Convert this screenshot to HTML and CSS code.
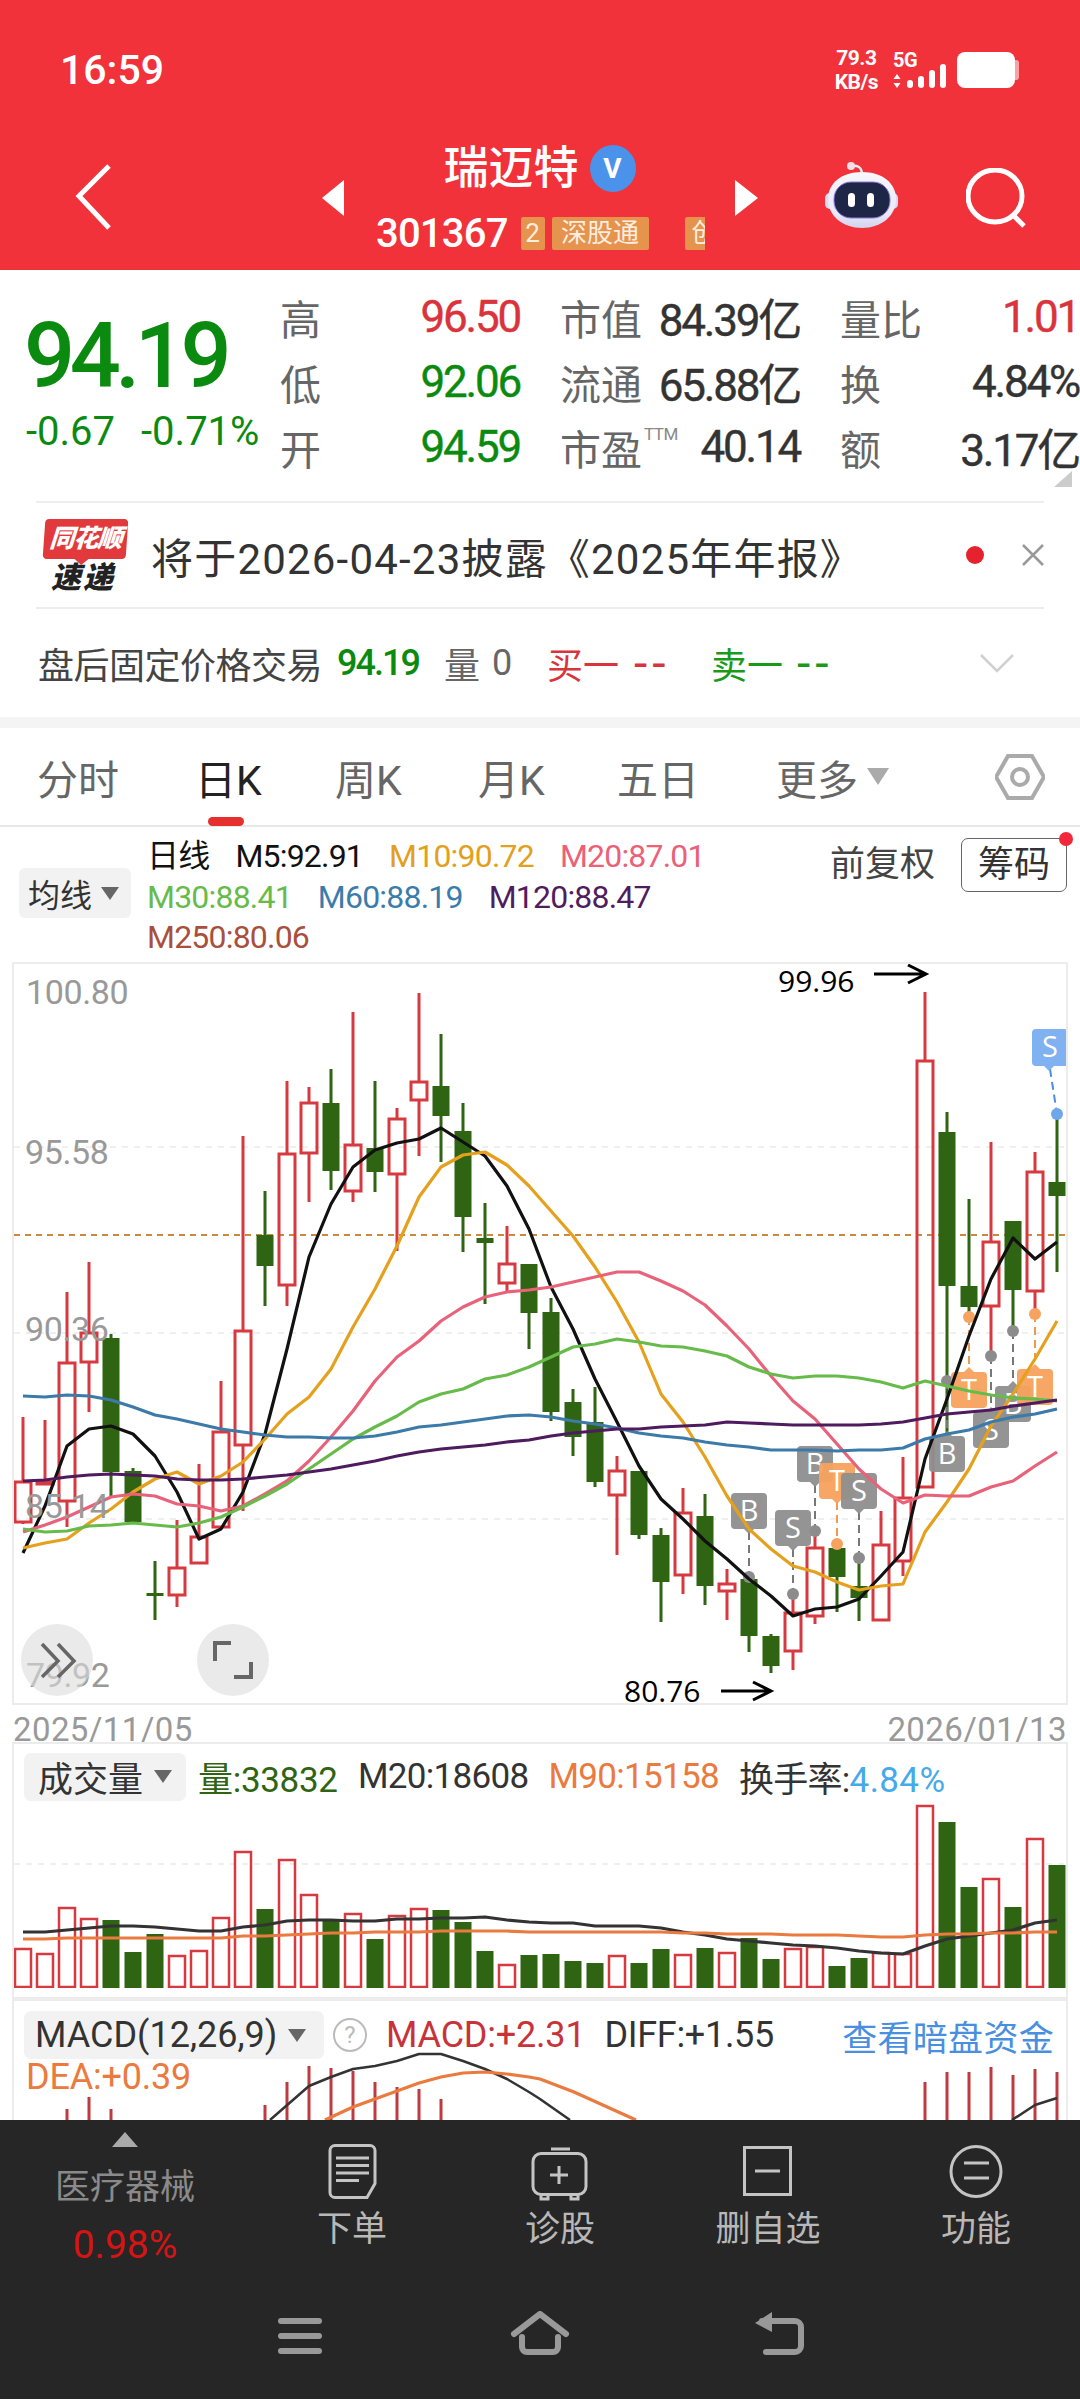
FILE: index.html
```html
<!DOCTYPE html>
<html lang="zh">
<head>
<meta charset="utf-8">
<title>瑞迈特 301367</title>
<link rel="stylesheet" href="styles.css">
</head>
<body>
<div class="page">
  <header class="head">
    <div class="status">
      <span class="time">16:59</span>
      <div class="st-right">
        <div class="net"><span>79.3</span><span>KB/s</span></div>
        <svg class="sig" width="54" height="36" viewBox="893 53 54 36">
          <text x="893" y="68" class="sig-t">5G</text>
          <path class="wf" d="M897 75l3.500 5h-7zM897 89l3.500-5h-7z"/>
          <rect class="wf" x="907" y="81" width="6" height="8" rx="3"/>
          <rect class="wf" x="918" y="77" width="6" height="12" rx="3"/>
          <rect class="wf" x="929" y="71" width="6" height="18" rx="3"/>
          <rect class="wf" x="940" y="65" width="6" height="24" rx="3"/>
        </svg>
        <svg class="bat" width="62" height="36" viewBox="0 0 62 36">
          <rect class="wf" width="58" height="36" rx="8"/>
          <path class="bat-tip" d="M58 8h1a3 3 0 0 1 3 3v14a3 3 0 0 1-3 3h-1z"/>
        </svg>
      </div>
    </div>
    <nav class="nav">
      <div class="nav-left">
        <svg class="back" width="38" height="68" viewBox="0 0 38 68"><path d="M34 3L4 33l30 32" class="ws"/></svg>
      </div>
      <span class="tri-l"></span>
      <div class="nav-mid">
        <div class="title"><span>瑞迈特</span><span class="vbadge">V</span></div>
        <div class="code">
          <span class="code-n">301367</span>
          <span class="tag tag-2">2</span>
          <span class="tag tag-s">深股通</span>
          <span class="tag tag-c">创</span>
        </div>
      </div>
      <span class="tri-r"></span>
      <svg class="robot" width="74" height="68" viewBox="825 162 74 68">
        <defs>
          <linearGradient id="rbg" x1="0" y1="0" x2="0" y2="1"><stop offset="0" stop-color="#f7f7fd"/><stop offset=".75" stop-color="#e8e8f8"/><stop offset="1" stop-color="#d2d3ee"/></linearGradient>
        </defs>
        <path class="rb-ant" d="M851 166c5-1 10 0 11 7"/>
        <circle class="rb-ball" cx="851" cy="166" r="4"/>
        <rect class="rb-ear" x="825" y="193" width="73" height="16" rx="5"/>
        <path class="rb-head" d="M862 172c20 0 34 11 34 27 0 17-15 29-34 29s-34-12-34-29c0-16 14-27 34-27z"/>
        <rect class="rb-face" x="834" y="182" width="56" height="36" rx="17"/>
        <rect class="rb-eye" x="848" y="193" width="7" height="14" rx="3.500"/>
        <rect class="rb-eye" x="867" y="193" width="7" height="14" rx="3.500"/>
      </svg>
      <svg class="search" width="60" height="60" viewBox="0 0 60 60"><ellipse cx="29" cy="28" rx="27" ry="26" class="ws"/><path d="M48 48l10 10" class="ws"/></svg>
    </nav>
  </header>

  <section class="quote">
    <div class="q-left">
      <div class="q-price">94.19</div>
      <div class="q-chg"><span>-0.67</span><span>-0.71%</span></div>
    </div>
    <div class="q-grid">
      <div class="cell"><span class="lb">高</span><span class="val red">96.50</span></div>
      <div class="cell"><span class="lb">市值</span><span class="val dark">84.39亿</span></div>
      <div class="cell"><span class="lb">量比</span><span class="val red">1.01</span></div>
      <div class="cell"><span class="lb">低</span><span class="val green">92.06</span></div>
      <div class="cell"><span class="lb">流通</span><span class="val dark">65.88亿</span></div>
      <div class="cell"><span class="lb">换</span><span class="val dark">4.84%</span></div>
      <div class="cell"><span class="lb">开</span><span class="val green">94.59</span></div>
      <div class="cell"><span class="lb">市盈<sup class="ttm">TTM</sup></span><span class="val dark">40.14</span></div>
      <div class="cell"><span class="lb">额</span><span class="val dark">3.17亿</span></div>
    </div>
    <span class="corner"></span>
  </section>

  <section class="notice">
    <div class="logo">
      <span class="logo-top">同花顺</span>
      <span class="logo-bot">速递</span>
    </div>
    <span class="notice-t">将于2026-04-23披露《2025年年报》</span>
    <span class="dot"></span>
    <svg class="close" width="24" height="24" viewBox="0 0 24 24"><path d="M2 2l20 20M22 2L2 22"/></svg>
  </section>

  <section class="after">
    <span class="af-t">盘后固定价格交易</span>
    <span class="af-p">94.19</span>
    <span class="af-q">量</span><span class="af-z">0</span>
    <span class="af-b">买一</span><span class="af-b af-d">--</span>
    <span class="af-s">卖一</span><span class="af-s af-d">--</span>
    <svg class="af-c" width="36" height="20" viewBox="0 0 36 20"><path d="M2 2l16 16L34 2"/></svg>
  </section>
  <div class="sep"></div>

  <div class="tabs">
    <span class="tab">分时</span>
    <span class="tab on">日K</span>
    <span class="tab">周K</span>
    <span class="tab">月K</span>
    <span class="tab">五日</span>
    <span class="tab">更多<i class="tab-tri"></i></span>
    <svg class="hex" width="50" height="46" viewBox="994 755 50 46"><path d="M1007 757h24l12 21-12 21h-24l-12-21z"/><circle cx="1019" cy="778" r="8"/></svg>
  </div>

  <div class="legend">
    <div class="lg-btn"><span>均线</span><i class="dn"></i></div>
    <div class="lg-lines">
      <div class="lg-row"><span class="c-k">日线</span><span class="c-k">M5:92.91</span><span class="c-10">M10:90.72</span><span class="c-20">M20:87.01</span></div>
      <div class="lg-row"><span class="c-30">M30:88.41</span><span class="c-60">M60:88.19</span><span class="c-120">M120:88.47</span></div>
      <div class="lg-row"><span class="c-250">M250:80.06</span></div>
    </div>
    <div class="lg-right">
      <span class="fq">前复权</span>
      <span class="chip">筹码<i class="chip-dot"></i></span>
    </div>
  </div>

  <div class="panel main">
    <svg class="chart" width="1052" height="739" viewBox="14 965 1052 739">
      <path class="grid" d="M14 1148H1066M14 1334H1066M14 1520H1066"/>
      <path class="ref" d="M14 1236H1066"/>
      <path class="r-w" d="M23 1418V1483M23 1523V1525M45 1421V1483M67 1293V1364M67 1502V1528M89 1263V1334M89 1363V1413M177 1521V1569M177 1596V1608M199 1465V1538M221 1382V1433M243 1137V1332M243 1446V1512M287 1082V1155M287 1286V1307M309 1088V1104M309 1154V1203M353 1013V1146M353 1192V1203M397 1109V1120M397 1175V1252M419 994V1083M419 1101V1157M507 1227V1265M507 1284V1293M617 1457V1472M617 1496V1556M683 1489V1514M683 1576V1595M727 1570V1585M727 1592V1621M793 1595V1614M793 1652V1671M815 1533V1549M815 1617V1625M881 1512V1546M903 1458V1499M903 1562V1577M925 993V1062M991 1143V1243M991 1307V1357M1035 1153V1173M1035 1292V1313"/>
      <path class="r-b" d="M15 1483h16v40h-16zM37 1483h16v2h-16zM59 1364h16v138h-16zM81 1334h16v29h-16zM169 1569h16v27h-16zM191 1538h16v26h-16zM213 1433h16v95h-16zM235 1332h16v114h-16zM279 1155h16v131h-16zM301 1104h16v50h-16zM345 1146h16v46h-16zM389 1120h16v55h-16zM411 1083h16v18h-16zM499 1265h16v19h-16zM609 1472h16v24h-16zM675 1514h16v62h-16zM719 1585h16v7h-16zM785 1614h16v38h-16zM807 1549h16v68h-16zM873 1546h16v75h-16zM895 1499h16v63h-16zM917 1062h16v426h-16zM983 1243h16v64h-16zM1027 1173h16v119h-16z"/>
      <path class="g-w" d="M111 1335V1497M133 1469V1523M155 1562V1621M265 1192V1307M331 1070V1191M375 1082V1193M441 1035V1163M463 1104V1253M485 1204V1305M529 1265V1350M551 1299V1422M573 1390V1457M595 1388V1488M639 1472V1540M661 1529V1623M705 1495V1606M749 1577V1653M771 1635V1674M837 1549V1613M859 1560V1622M947 1113V1437M969 1200V1318M1013 1222V1332M1057 1115V1273"/>
      <path class="g-b" d="M102.500 1339h17v134h-17zM124.500 1472h17v51h-17zM146.500 1594h17v3h-17zM256.500 1236h17v31h-17zM322.500 1104h17v68h-17zM366.500 1149h17v24h-17zM432.500 1087h17v30h-17zM454.500 1132h17v86h-17zM476.500 1239h17v5h-17zM520.500 1265h17v49h-17zM542.500 1313h17v100h-17zM564.500 1403h17v35h-17zM586.500 1423h17v60h-17zM630.500 1472h17v64h-17zM652.500 1536h17v47h-17zM696.500 1517h17v70h-17zM740.500 1580h17v57h-17zM762.500 1637h17v30h-17zM828.500 1549h17v29h-17zM850.500 1587h17v12h-17zM938.500 1133h17v154h-17zM960.500 1287h17v21h-17zM1004.500 1222h17v69h-17zM1048.500 1183h17v14h-17z"/>

      <path class="d-g" d="M749 1533V1578M793 1550V1595M815 1486V1532M859 1513V1559M947 1382V1434M991 1357V1410M1013 1332V1384"/>
      <path class="d-o" d="M837 1503V1545M969 1318V1370M1035 1315V1367"/>
      <path class="d-b" d="M1050 1070L1057 1115"/>
      <g class="dots-g"><circle cx="749" cy="1578" r="6"/><circle cx="793" cy="1595" r="6"/><circle cx="815" cy="1532" r="6"/><circle cx="859" cy="1559" r="6"/><circle cx="947" cy="1382" r="6"/><circle cx="991" cy="1357" r="6"/><circle cx="1013" cy="1332" r="6"/></g>
      <g class="dots-o"><circle cx="837" cy="1545" r="6"/><circle cx="969" cy="1318" r="6"/><circle cx="1035" cy="1315" r="6"/></g>
      <circle class="dots-b" cx="1057" cy="1115" r="6"/>

      <g class="mk mk-g"><rect x="731" y="1494" width="36" height="36" rx="4"/><path d="M744 1530h10l-5 5z"/><text x="749" y="1522">B</text></g>
      <g class="mk mk-g"><rect x="775" y="1511" width="36" height="36" rx="4"/><path d="M788 1547h10l-5 5z"/><text x="793" y="1539">S</text></g>
      <g class="mk mk-g"><rect x="797" y="1447" width="36" height="36" rx="4"/><path d="M810 1483h10l-5 5z"/><text x="815" y="1475">B</text></g>
      <g class="mk mk-o"><rect x="819" y="1464" width="36" height="36" rx="4"/><path d="M832 1500h10l-5 5z"/><text x="837" y="1492">T</text></g>
      <g class="mk mk-g"><rect x="841" y="1474" width="36" height="36" rx="4"/><path d="M854 1510h10l-5 5z"/><text x="859" y="1502">S</text></g>
      <g class="mk mk-g"><rect x="929" y="1437" width="36" height="36" rx="4"/><path d="M942 1437h10l-5-5z"/><text x="947" y="1465">B</text></g>
      <g class="mk mk-o"><rect x="951" y="1373" width="36" height="36" rx="4"/><path d="M964 1373h10l-5-5z"/><text x="969" y="1401">T</text></g>
      <g class="mk mk-g"><rect x="973" y="1413" width="36" height="36" rx="4"/><path d="M986 1413h10l-5-5z"/><text x="991" y="1441">S</text></g>
      <g class="mk mk-g"><rect x="995" y="1387" width="36" height="36" rx="4"/><path d="M1008 1387h10l-5-5z"/><text x="1013" y="1415">B</text></g>
      <g class="mk mk-o"><rect x="1017" y="1370" width="36" height="36" rx="4"/><path d="M1030 1370h10l-5-5z"/><text x="1035" y="1398">T</text></g>
      <g class="mk mk-b"><rect x="1032" y="1030" width="36" height="37" rx="4"/><path d="M1044 1067h10l-5 5z"/><text x="1050" y="1058">S</text></g>

      <polyline class="l-k" points="23,1554 45,1507 67,1447 89,1430 111,1427 133,1435 155,1457 177,1493 199,1540 221,1530 243,1493 265,1435 287,1350 309,1258 331,1205 353,1168 375,1151 397,1144 419,1140 441,1129 463,1143 485,1157 507,1187 529,1230 551,1288 573,1330 595,1380 617,1423 639,1467 661,1500 683,1520 705,1542 727,1560 749,1580 771,1597 793,1617 815,1610 837,1608 859,1600 881,1577 903,1553 925,1460 947,1400 969,1337 991,1280 1013,1239 1035,1260 1057,1243"/>
      <polyline class="l-10" points="23,1549 45,1544 67,1540 89,1524 111,1510 133,1493 155,1480 177,1473 199,1485 221,1477 243,1463 265,1440 287,1415 309,1398 331,1370 353,1328 375,1290 397,1247 419,1198 441,1168 463,1156 485,1153 507,1166 529,1187 551,1212 573,1237 595,1268 617,1303 639,1343 661,1395 683,1423 705,1458 727,1497 749,1530 771,1550 793,1567 815,1573 837,1583 859,1591 881,1587 903,1585 925,1533 947,1503 969,1470 991,1427 1013,1395 1035,1360 1057,1322"/>
      <polyline class="l-20" points="23,1533 45,1526 67,1518 89,1508 111,1498 133,1495 155,1497 177,1505 199,1507 221,1512 243,1507 265,1495 287,1482 309,1462 331,1438 353,1412 375,1382 397,1358 419,1342 441,1322 463,1308 485,1298 507,1293 529,1291 551,1288 573,1283 595,1278 617,1273 639,1273 661,1282 683,1292 705,1306 727,1327 749,1350 771,1377 793,1402 815,1420 837,1445 859,1470 881,1490 903,1504 925,1496 947,1497 969,1497 991,1488 1013,1482 1035,1467 1057,1453"/>
      <polyline class="l-30" points="23,1530 45,1533 67,1532 89,1527 111,1526 133,1524 155,1526 177,1528 199,1524 221,1518 243,1508 265,1497 287,1485 309,1470 331,1455 353,1440 375,1428 397,1417 419,1403 441,1395 463,1390 485,1380 507,1376 529,1368 551,1358 573,1348 595,1345 617,1340 639,1343 661,1347 683,1348 705,1352 727,1357 749,1368 771,1375 793,1379 815,1377 837,1377 859,1379 881,1383 903,1389 925,1382 947,1387 969,1392 991,1396 1013,1399 1035,1400 1057,1402"/>
      <polyline class="l-60" points="23,1397 45,1398 67,1396 89,1397 111,1401 133,1408 155,1416 177,1420 199,1425 221,1430 243,1433 265,1436 287,1438 309,1438 331,1439 353,1439 375,1437 397,1433 419,1428 441,1426 463,1423 485,1420 507,1417 529,1416 551,1418 573,1422 595,1425 617,1429 639,1434 661,1437 683,1439 705,1443 727,1446 749,1448 771,1451 793,1451 815,1451 837,1452 859,1451 881,1451 903,1449 925,1440 947,1435 969,1431 991,1423 1013,1418 1035,1415 1057,1410"/>
      <polyline class="l-120" points="23,1482 45,1481 67,1478 89,1476 111,1475 133,1476 155,1477 177,1480 199,1481 221,1481 243,1480 265,1478 287,1476 309,1473 331,1470 353,1466 375,1462 397,1457 419,1453 441,1450 463,1448 485,1446 507,1443 529,1441 551,1437 573,1434 595,1432 617,1430 639,1430 661,1428 683,1427 705,1426 727,1423 749,1424 771,1425 793,1426 815,1426 837,1426 859,1426 881,1425 903,1423 925,1419 947,1415 969,1413 991,1411 1013,1407 1035,1404 1057,1401"/>

      <text class="ax" x="26" y="1005">100.80</text>
      <text class="ax" x="25" y="1165">95.58</text>
      <text class="ax" x="25" y="1342">90.36</text>
      <text class="ax" x="25" y="1519">85.14</text>
      <text class="ax" x="26" y="1688">79.92</text>

      <text class="note" x="778" y="993">99.96</text>
      <path class="arr" d="M874 975H925M908 966L926 975L908 984"/>
      <text class="note" x="624" y="1703">80.76</text>
      <path class="arr" d="M721 1692H770M753 1683L771 1692L753 1701"/>

      <circle class="round" cx="57" cy="1661" r="36"/>
      <path class="ico" d="M42 1645l16 17-16 16M58 1645l16 17-16 16"/>
      <circle class="round" cx="233" cy="1661" r="36"/>
      <path class="ico2" d="M215 1662v-18h16M234 1678h17v-15"/>
    </svg>
  </div>

  <div class="dates"><span>2025/11/05</span><span>2026/01/13</span></div>

  <div class="panel vol">
    <div class="sub-head">
      <div class="sub-btn sub-btn-v"><span>成交量</span><i class="dn"></i></div>
      <span class="t-g">量:33832</span>
      <span class="t-d">M20:18608</span>
      <span class="t-o">M90:15158</span>
      <span class="t-d">换手率:<b class="t-b">4.84%</b></span>
    </div>
    <svg class="chart" width="1052" height="186" viewBox="14 1803 1052 186">
      <path class="grid" d="M14 1865H1066"/>
      <path class="v-r" d="M15 1950h16v38h-16zM37 1955h16v33h-16zM59 1909h16v79h-16zM81 1920h16v68h-16zM169 1957h16v31h-16zM191 1952h16v36h-16zM213 1919h16v69h-16zM235 1853h16v135h-16zM279 1861h16v127h-16zM301 1896h16v92h-16zM345 1915h16v73h-16zM389 1917h16v71h-16zM411 1910h16v78h-16zM499 1966h16v22h-16zM609 1957h16v31h-16zM675 1956h16v32h-16zM719 1954h16v34h-16zM785 1950h16v38h-16zM807 1948h16v40h-16zM873 1954h16v34h-16zM895 1955h16v33h-16zM917 1807h16v181h-16zM983 1880h16v108h-16zM1027 1840h16v148h-16z"/>
      <path class="g-b" d="M102.500 1921h17v68h-17zM124.500 1953h17v36h-17zM146.500 1935h17v54h-17zM256.500 1910h17v79h-17zM322.500 1920h17v69h-17zM366.500 1940h17v49h-17zM432.500 1911h17v78h-17zM454.500 1923h17v66h-17zM476.500 1952h17v37h-17zM520.500 1956h17v33h-17zM542.500 1955h17v34h-17zM564.500 1962h17v27h-17zM586.500 1964h17v25h-17zM630.500 1964h17v25h-17zM652.500 1950h17v39h-17zM696.500 1949h17v40h-17zM740.500 1939h17v50h-17zM762.500 1960h17v29h-17zM828.500 1967h17v22h-17zM850.500 1959h17v30h-17zM938.500 1823h17v166h-17zM960.500 1888h17v101h-17zM1004.500 1908h17v81h-17zM1048.500 1866h17v123h-17z"/>
      <polyline class="l-v" points="23,1933 45,1933 67,1931 89,1929 111,1927 133,1927 155,1928 177,1930 199,1932 221,1932 243,1928 265,1926 287,1922 309,1921 331,1921 353,1922 375,1922 397,1920 419,1920 441,1919 463,1919 485,1918 507,1921 529,1923 551,1924 573,1924 595,1927 617,1927 639,1927 661,1929 683,1933 705,1936 727,1940 749,1942 771,1944 793,1946 815,1947 837,1949 859,1952 881,1954 903,1955 925,1947 947,1940 969,1937 991,1934 1013,1931 1035,1924 1057,1921"/>
      <polyline class="l-o" points="23,1940 45,1940 67,1939 89,1939 111,1939 133,1939 155,1939 177,1939 199,1939 221,1939 243,1937 265,1937 287,1936 309,1935 331,1934 353,1934 375,1933 397,1933 419,1933 441,1932 463,1932 485,1932 507,1932 529,1933 551,1933 573,1933 595,1933 617,1933 639,1933 661,1933 683,1934 705,1934 727,1935 749,1935 771,1935 793,1936 815,1936 837,1936 859,1937 881,1938 903,1938 925,1936 947,1935 969,1935 991,1934 1013,1934 1035,1933 1057,1933"/>
    </svg>
  </div>

  <div class="panel macd">
    <svg class="chart macd-svg" width="1052" height="119" viewBox="14 2002 1052 119">
      <path class="m-r" d="M67 2110V2121M89 2098V2121M111 2110V2121M265 2106V2121M287 2083V2121M309 2067V2121M331 2069V2121M353 2072V2121M375 2083V2121M397 2088V2121M419 2090V2121M441 2100V2121M925 2083V2121M947 2073V2121M969 2073V2121M991 2068V2121M1013 2076V2121M1035 2070V2121M1057 2073V2121"/>
      <polyline class="l-m" points="270,2121 309,2087 331,2078 353,2070 375,2067 397,2062 419,2055 441,2055 463,2062 485,2070 507,2080 529,2093 540,2100 570,2121"/>
      <polyline class="l-m" points="1012,2121 1035,2106 1057,2099"/>
      <polyline class="l-mo" points="325,2121 353,2108 375,2100 397,2092 419,2084 441,2078 463,2074 485,2073 507,2075 529,2078 540,2080 574,2093 636,2121"/>
    </svg>
    <div class="sub-head macd-head">
      <div class="sub-btn sub-btn-m"><span>MACD(12,26,9)</span><i class="dn"></i></div>
      <span class="q-mark">?</span>
      <span class="t-r">MACD:+2.31</span>
      <span class="t-d t-diff">DIFF:+1.55</span>
      <span class="t-l">查看暗盘资金</span>
    </div>
    <div class="dea">DEA:+0.39</div>
  </div>

  <footer class="foot">
    <div class="foot-row">
      <div class="f-sec">
        <i class="f-up"></i>
        <span class="f-name">医疗器械</span>
        <span class="f-pct">0.98%</span>
      </div>
      <div class="f-tab">
        <svg class="f-ic" width="60" height="58" viewBox="322 2143 60 58"><path d="M335 2145.500h35a5 5 0 0 1 5 5v33l-8 14h-32a5 5 0 0 1-5-5v-42a5 5 0 0 1 5-5zM336 2158h33M336 2165.500h33M336 2173h33M336 2180.500h23"/></svg>
        <span>下单</span>
      </div>
      <div class="f-tab">
        <svg class="f-ic" width="60" height="58" viewBox="530 2143 60 58"><path d="M551 2149h19M541 2153.500h37a8 8 0 0 1 8 8v25a8 8 0 0 1-8 8h-37a8 8 0 0 1-8-8v-25a8 8 0 0 1 8-8zM559 2166v18M550 2175h18M541 2195v4h7v-4M571 2195v4h7v-4"/></svg>
        <span>诊股</span>
      </div>
      <div class="f-tab">
        <svg class="f-ic" width="60" height="58" viewBox="738 2143 60 58"><path d="M744.500 2147.500h46v47h-46zM755 2171h25"/></svg>
        <span>删自选</span>
      </div>
      <div class="f-tab">
        <svg class="f-ic" width="60" height="58" viewBox="945 2143 60 58"><circle cx="975" cy="2171.500" r="25"/><path d="M963 2163h25M963 2178h25"/></svg>
        <span>功能</span>
      </div>
    </div>
    <div class="sys">
      <svg width="60" height="44" viewBox="270 2312 60 44"><path class="sys-f" d="M281 2319h38a3 3 0 0 1 0 6h-38a3 3 0 0 1 0-6zM281 2334h38a3 3 0 0 1 0 6h-38a3 3 0 0 1 0-6zM281 2349h38a3 3 0 0 1 0 6h-38a3 3 0 0 1 0-6z"/></svg>
      <svg width="60" height="44" viewBox="510 2312 60 44"><path class="sys-s" d="M514 2335l26-20 26 20"/><path class="sys-s" d="M522 2338v10a5 5 0 0 0 5 5h26a5 5 0 0 0 5-5v-10"/></svg>
      <svg width="60" height="44" viewBox="750 2312 60 44"><path class="sys-s" d="M762 2322h33a6 6 0 0 1 6 6v19a6 6 0 0 1-6 6h-29"/><path class="sys-f" d="M772 2313v20l-17-9z"/></svg>
    </div>
  </footer>
</div>
</body>
</html>
```

FILE: styles.css
```css
* { box-sizing: border-box; }
html, body { margin: 0; padding: 0; }
body { width: 1080px; height: 2400px; overflow: hidden; background: #fff; font-family: Roboto, "Noto Sans CJK SC", sans-serif; color: #333; }
i { font-style: normal; }
.page { width: 1080px; height: 2400px; display: flex; flex-direction: column; overflow: hidden; }

/* header */
.head { height: 270px; background: #f1323a; color: #fff; flex: none; }
.status { height: 140px; padding: 0 61px 0 60px; display: flex; align-items: center; justify-content: space-between; }
.time { font-size: 41px; font-weight: 500; }
.st-right { display: flex; align-items: center; }
.net { display: flex; flex-direction: column; align-items: center; font-size: 21px; font-weight: 700; line-height: 24px; letter-spacing: -.5px; margin-right: 15px; }
.sig { margin-right: 10px; overflow: visible; }
.sig-t { font-size: 20px; font-weight: 700; fill: #fff; letter-spacing: -.5px; }
.wf { fill: #fff; }
.bat-tip { fill: #fff; opacity: .55; }
.ws { fill: none; stroke: #fff; stroke-width: 5; }
.nav { height: 130px; display: flex; align-items: flex-start; }
.nav-left { width: 322px; padding: 23px 0 0 75px; }
.back { display: block; }
.tri-l, .tri-r { width: 0; height: 0; margin-top: 40px; border-top: 18px solid transparent; border-bottom: 18px solid transparent; }
.tri-l { border-right: 22px solid #fff; }
.tri-r { border-left: 23px solid #fff; }
.nav-mid { width: 391px; display: flex; flex-direction: column; }
.title { margin-top: 5px; height: 47px; display: flex; justify-content: center; align-items: center; gap: 11px; font-size: 45px; font-weight: 500; line-height: 47px; }
.vbadge { width: 46px; height: 47px; border-radius: 50%; background: #4b93ea; font-size: 28px; font-weight: 700; font-family: Roboto, sans-serif; display: flex; align-items: center; justify-content: center; }
.code { margin-top: 18px; height: 47px; width: 361px; padding-left: 32px; display: flex; align-items: center; overflow: hidden; white-space: nowrap; }
.code-n { font-size: 40px; font-weight: 500; letter-spacing: -.8px; line-height: 47px; }
.tag { background: #e6934d; height: 33px; font-size: 26px; line-height: 33px; text-align: center; flex: none; border-radius: 2px; color: #fdeee0; }
.tag-2 { width: 24px; margin-left: 13px; }
.tag-s { width: 97px; margin-left: 7px; }
.tag-c { width: 36px; margin-left: 36px; text-align: left; padding-left: 7px; }
.robot { margin: 22px 0 0 67px; }
.rb-ant { fill: none; stroke: #eee; stroke-width: 2.500; }
.rb-ball { fill: #f4dfe4; }
.rb-ear { fill: #d9daf2; }
.rb-head { fill: url(#rbg); }
.rb-face { fill: #1d2647; stroke: #8f79d8; stroke-width: 1; }
.rb-eye { fill: #fff; }
.search { margin: 28px 0 0 67px; }

/* quote */
.quote { height: 231px; flex: none; display: flex; position: relative; }
.q-left { width: 280px; padding: 42px 0 0 26px; flex: none; }
.q-price { font-size: 90px; line-height: 90px; font-weight: 500; color: #0b8a10; letter-spacing: -5.500px; margin-left: -2px; }
.q-chg { margin-top: 9px; display: flex; gap: 26px; font-size: 40px; line-height: 42px; color: #0b8a10; white-space: nowrap; }
.q-grid { margin-top: 14px; display: grid; grid-template-columns: 240px 240px 239px; column-gap: 40px; grid-auto-rows: 65px; white-space: nowrap; }
.cell { display: flex; justify-content: space-between; align-items: center; }
.lb { font-size: 41px; color: #666; position: relative; }
.ttm { font-size: 17px; color: #888; position: absolute; left: 84px; top: 8px; line-height: 18px; letter-spacing: -.5px; }
.val { font-size: 44px; font-weight: 400; letter-spacing: -2.200px; -webkit-text-stroke: .4px currentColor; }
.red { color: #d9333c; }
.green { color: #0b8a10; }
.dark { color: #333; }
.corner { position: absolute; right: 8px; bottom: 14px; width: 0; height: 0; border-left: 18px solid transparent; border-bottom: 16px solid #ccc; }

/* notice */
.notice { height: 108px; flex: none; margin: 0 36px; border-top: 2px solid #eee; border-bottom: 2px solid #eee; display: flex; align-items: center; padding-left: 2px; }
.logo { width: 90px; display: flex; flex-direction: column; align-items: center; flex: none; }
.logo-top { width: 83px; height: 40px; background: #e23a3c; color: #fff; font-size: 25px; line-height: 40px; font-weight: 900; font-style: italic; text-align: center; border-radius: 4px; position: relative; letter-spacing: -1px; white-space: nowrap; transform: skewX(-4deg); margin-left: 4px; }
.logo-top::after { content: ""; position: absolute; left: 32px; top: 40px; border-left: 7px solid transparent; border-right: 7px solid transparent; border-top: 6px solid #e23a3c; }
.logo-bot { font-size: 30px; line-height: 28px; margin-top: 5px; font-weight: 900; font-style: italic; color: #222; letter-spacing: 2px; }
.notice-t { margin-left: 23px; font-size: 42px; color: #333; white-space: nowrap; letter-spacing: 1.200px; flex: none; width: 692px; }
.dot { width: 18px; height: 18px; border-radius: 50%; background: #e6222e; margin-left: 123px; flex: none; }
.close { margin-left: 37px; flex: none; }
.close path { stroke: #999; stroke-width: 2.500; fill: none; }

/* after hours */
.after { height: 108px; flex: none; display: flex; align-items: center; padding-left: 38px; white-space: nowrap; font-size: 36px; color: #444; }
.af-t { width: 299px; letter-spacing: -.5px; }
.af-p { color: #0b8a10; font-weight: 500; width: 107px; letter-spacing: -2px; }
.af-q { color: #666; width: 48px; }
.af-z { color: #666; width: 55px; }
.af-b { color: #d9333c; width: 87px; }
.af-s { color: #1a9a1a; width: 86px; }
.af-b.af-d { width: 77px; font-size: 48px; letter-spacing: 5px; }
.af-s.af-d { width: 182px; font-size: 48px; letter-spacing: 5px; }
.af-c path { fill: none; stroke: #d0d0d0; stroke-width: 2.500; }
.sep { height: 11px; background: #f4f4f4; flex: none; }

/* tabs */
.tabs { height: 99px; flex: none; display: grid; grid-template-columns: 158px 140px 143px 139px 159px 219px 50px; padding-left: 37px; align-items: stretch; border-bottom: 2px solid #e8e8e8; font-size: 41px; color: #666; position: relative; }
.tab { display: flex; align-items: center; position: relative; white-space: nowrap; }
.tab.on { color: #222; }
.tab.on::after { content: ""; position: absolute; left: 13px; bottom: -1px; width: 36px; height: 9px; border-radius: 5px; background: #e5302f; }
.tab-tri { width: 0; height: 0; margin-left: 9px; margin-top: 0; border-left: 11px solid transparent; border-right: 11px solid transparent; border-top: 17px solid #aaa; }
.hex { align-self: center; }
.hex path, .hex circle { fill: none; stroke: #aaa; stroke-width: 4; }

/* legend */
.legend { height: 135px; flex: none; display: flex; align-items: flex-start; padding-left: 19px; white-space: nowrap; }
.lg-btn { margin-top: 41px; width: 112px; height: 50px; background: #f2f2f2; border-radius: 6px; display: flex; align-items: center; padding-left: 9px; font-size: 32px; color: #333; flex: none; }
.dn { width: 0; height: 0; margin-left: 9px; border-left: 9px solid transparent; border-right: 9px solid transparent; border-top: 13px solid #666; flex: none; }
.lg-lines { margin: 9px 0 0 16px; font-size: 32px; line-height: 41px; letter-spacing: -.8px; flex: none; }
.lg-row { display: flex; gap: 26px; height: 40.500px; }
.c-k { color: #111; }
.c-10 { color: #e2a020; }
.c-20 { color: #ec6078; }
.c-30 { color: #67bb4a; }
.c-60 { color: #3a7cac; }
.c-120 { color: #4f1d5f; }
.c-250 { color: #a94f3c; }
.lg-right { margin-left: auto; display: flex; align-items: flex-start; padding: 11px 13px 0 0; }
.fq { font-size: 35px; color: #444; line-height: 54px; margin-right: 26px; }
.chip { width: 106px; height: 54px; border: 1px solid #666; border-radius: 7px; font-size: 36px; line-height: 52px; text-align: center; color: #333; position: relative; }
.chip-dot { position: absolute; right: -7px; top: -7px; width: 14px; height: 14px; border-radius: 50%; background: #f3283a; }

/* panels */
.panel { margin: 0 12px; border: 2px solid #ececec; flex: none; }
.main { height: 743px; }
.chart { display: block; }
.grid { fill: none; stroke: #eaeaea; stroke-width: 1.500; stroke-dasharray: 6 6; }
.ref { fill: none; stroke: #c98a3f; stroke-width: 2; stroke-dasharray: 6 5; }
.r-w { fill: none; stroke: #d63a40; stroke-width: 3; }
.r-b { fill: none; stroke: #d63a40; stroke-width: 3; }
.v-r { fill: none; stroke: #d63a40; stroke-width: 2.500; }
.g-w { fill: none; stroke: #2f6412; stroke-width: 3; }
.g-b { fill: #2f6412; }
.d-g { fill: none; stroke: #777; stroke-width: 2; stroke-dasharray: 8 5; }
.d-o { fill: none; stroke: #ef9a4e; stroke-width: 2; stroke-dasharray: 8 5; }
.d-b { fill: none; stroke: #4a8fdf; stroke-width: 2; stroke-dasharray: 8 5; }
.dots-g { fill: #8c8c8c; }
.dots-o { fill: #f7a25e; }
.dots-b { fill: #6fa8ea; }
.mk text { font-family: "Open Sans", sans-serif; font-size: 29px; fill: #fff; text-anchor: middle; }
.mk-g { fill: #8f8f8f; opacity: .95; }
.mk-o { fill: #f7a25e; opacity: .95; }
.mk-b { fill: #80b1f0; }
polyline { fill: none; stroke-width: 3.200; stroke-linejoin: round; }
.l-k { stroke: #111; }
.l-10 { stroke: #e5a01e; }
.l-20 { stroke: #e8627a; }
.l-30 { stroke: #67bb4a; }
.l-60 { stroke: #3b7aa9; }
.l-120 { stroke: #4e1b5e; }
.ax { font-size: 34px; fill: #999; letter-spacing: -.4px; }
.note { font-family: "Open Sans", sans-serif; font-size: 30px; fill: #000; }
.arr { fill: none; stroke: #000; stroke-width: 3; }
.round { fill: #dcdcdc; opacity: .6; }
.ico { fill: none; stroke: #666; stroke-width: 3.500; }
.ico2 { fill: none; stroke: #666; stroke-width: 4; }
.dates { height: 37px; flex: none; margin: 0 13px; padding-top: 11px; display: flex; justify-content: space-between; align-items: center; font-size: 33px; color: #999; letter-spacing: .4px; }

.vol { height: 257px; display: flex; flex-direction: column; }
.sub-head { height: 58px; flex: none; display: flex; align-items: center; white-space: nowrap; font-size: 35px; padding: 7px 0 0 10px; position: relative; }
.sub-btn { height: 48px; background: #f2f2f2; border-radius: 7px; display: flex; align-items: center; padding-left: 14px; color: #333; flex: none; }
.sub-btn-v { width: 162px; margin-right: 12px; }
.sub-btn-m { width: 300px; font-size: 36px; padding-left: 11px; }
.sub-btn .dn { margin-left: 11px; }
.t-g { color: #2f6412; width: 160px; letter-spacing: -.3px; }
.t-d { color: #333; letter-spacing: -.7px; }
.t-diff { letter-spacing: -.3px; }
.t-o { color: #ea7a3e; margin: 0 20px; letter-spacing: -.7px; }
.t-b { color: #45a9ea; font-weight: 400; letter-spacing: .4px; }
.l-v { stroke: #333; }
.l-o { stroke: #ea7a3e; }
.m-r { fill: none; stroke: #bf3a40; stroke-width: 3; }
.l-m { stroke: #333; stroke-width: 2.500; }
.l-mo { stroke: #ea7a3e; }
.macd { height: 121px; border-bottom: 0; position: relative; overflow: hidden; }
.macd-svg { position: absolute; left: 0; top: 0; }
.macd-head { padding-top: 10px; font-size: 36px; }
.q-mark { width: 34px; height: 34px; border-radius: 50%; border: 2px solid #bbb; color: #bbb; font-size: 24px; line-height: 30px; text-align: center; margin-left: 9px; flex: none; }
.t-r { color: #c8333a; margin-left: 19px; margin-right: 19px; letter-spacing: -.2px; }
.t-l { color: #4a8fdf; margin-left: auto; margin-right: 12px; font-size: 35px; letter-spacing: .3px; }
.dea { position: relative; color: #ea7a3e; font-size: 36px; line-height: 36px; padding-left: 12px; letter-spacing: -.2px; }

/* footer */
.foot { flex: none; height: 279px; background: #262626; }
.foot-row { height: 170px; display: flex; align-items: flex-start; }
.f-sec { width: 250px; display: flex; flex-direction: column; align-items: center; padding-top: 12px; color: #8a8a8a; }
.f-up { width: 0; height: 0; border-left: 13px solid transparent; border-right: 13px solid transparent; border-bottom: 15px solid #aaa; }
.f-name { font-size: 35px; line-height: 40px; margin-top: 21px; }
.f-pct { font-size: 39px; line-height: 40px; margin-top: 17px; color: #d61414; }
.f-tab { width: 208px; display: flex; flex-direction: column; align-items: center; padding-top: 23px; font-size: 35px; color: #b8b8b8; }
.f-tab:nth-child(2) { margin-left: -2px; }
.f-tab span { line-height: 40px; margin-top: 9px; }
.f-ic path, .f-ic circle { fill: none; stroke: #c4c4c4; stroke-width: 3; }
.sys { display: flex; justify-content: center; gap: 180px; margin-top: 21px; }
.sys svg { display: block; }
.sys-f { fill: #999; }
.sys-s { fill: none; stroke: #999; stroke-width: 6; stroke-linecap: round; stroke-linejoin: round; }
```
